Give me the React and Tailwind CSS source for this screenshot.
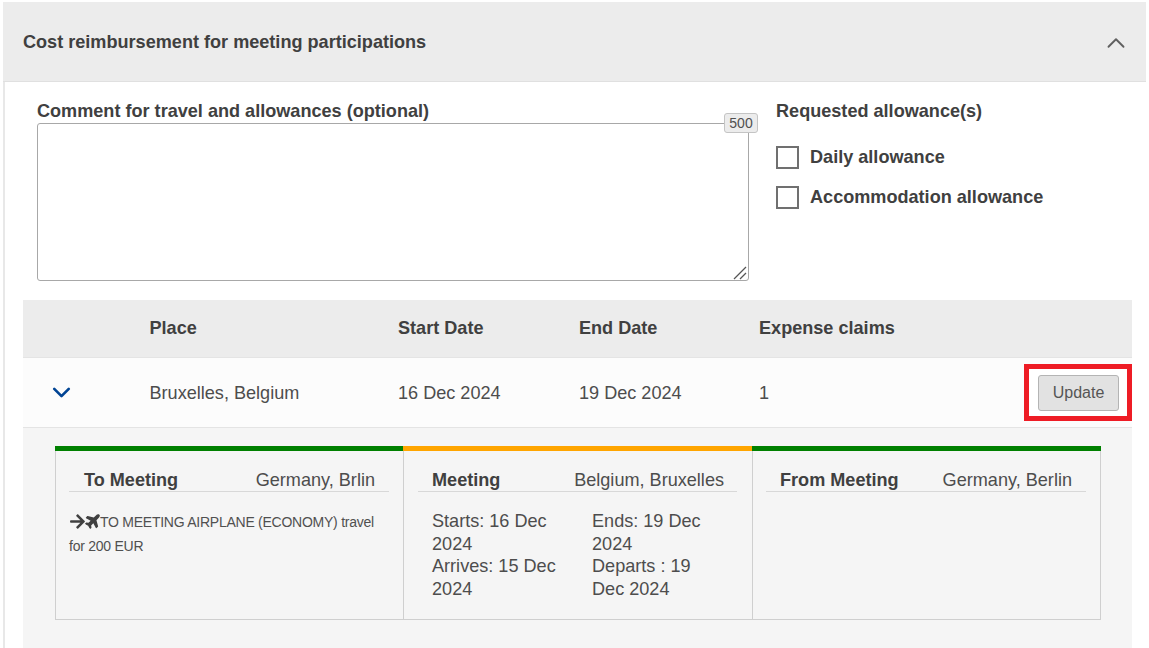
import React from 'react';
import { ChevronUp, ChevronDown } from 'lucide-react';
import { FaArrowRight, FaPlane } from 'react-icons/fa';

const Allowance = ({ label }) => (
  <label className="flex items-center gap-[11px] h-[24px] font-bold text-[#404040] text-[18.1px]">
    <span className="w-[23px] h-[23px] border-2 border-[#707070] bg-white shrink-0" />
    <span className="pt-[1px]">{label}</span>
  </label>
);

const LegCard = ({ title, place, color, width, head, last, children }) => (
  <div className={`${width} h-[174px] border-b border-l border-[#cfcfcf] ${last ? 'border-r' : ''}`}>
    <div className={`h-[5px] -ml-[1px] ${last ? '-mr-[1px]' : ''} ${color}`} />
    <div className={`mt-[16px] pt-[2px] h-[25px] flex justify-between items-center border-b border-[#d8d8d8] text-[18.1px] leading-[20px] ${head}`}>
      <span className="font-bold text-[#404040]">{title}</span>
      <span className="text-[#4d4d4d]">{place}</span>
    </div>
    {children}
  </div>
);

export default function App() {
  return (
    <div className="w-[1149px] h-[648px] overflow-hidden bg-white pt-[2px] pl-[3px] pr-[3px] font-['Liberation_Sans',Arial,sans-serif] text-[#404040]">
      <div className="h-[646px] border-l-2 border-[#e8e8e8]">
        <div className="-ml-[2px] h-[80px] pt-[2px] bg-[#ececec] border-b border-[#e0e0e0] flex items-center justify-between pl-[20px] pr-[15px]">
          <h2 className="font-bold text-[18.1px] text-[#404040]">Cost reimbursement for meeting participations</h2>
          <ChevronUp size={30} strokeWidth={1.5} className="text-[#606060]" />
        </div>

        <div className="flex pl-[32px] pt-[18px] h-[218px]">
          <div className="w-[712px]">
            <div className="mb-[1px] font-bold text-[18.1px] leading-[22px] text-[#404040]">Comment for travel and allowances (optional)</div>
            <div className="relative">
              <textarea className="block w-[712px] h-[158px] border border-[#a8a8a8] rounded-[3px] bg-white outline-none resize-none" />
              <span className="absolute right-[-9px] top-[-10px] w-[34px] h-[20px] flex items-center justify-center bg-[#ececec] border border-[#c4c4c4] rounded-[3px] text-[14px] text-[#505050]">500</span>
              <svg className="absolute right-[1px] bottom-[1px] w-[15px] h-[15px]" viewBox="0 0 15 15" fill="none" stroke="#555555" strokeWidth="1.2">
                <path d="M1 14 L13 2" />
                <path d="M7 14 L13 8" />
              </svg>
            </div>
          </div>
          <div className="ml-[27px]">
            <div className="font-bold text-[18.1px] leading-[22px] text-[#404040]">Requested allowance(s)</div>
            <div className="mt-[23px] flex flex-col gap-[16px]">
              <Allowance label="Daily allowance" />
              <Allowance label="Accommodation allowance" />
            </div>
          </div>
        </div>

        <div className="ml-[18px] w-[1109px]">
          <div className="h-[58px] pt-[1px] bg-[#ececec] flex items-center font-bold text-[18.1px] text-[#404040] border-b border-[#e4e4e4]">
            <span className="w-[126.5px]" />
            <span className="w-[248.5px]">Place</span>
            <span className="w-[181px]">Start Date</span>
            <span className="w-[180px]">End Date</span>
            <span>Expense claims</span>
          </div>
          <div className="h-[70px] bg-[#fcfcfc] flex items-center text-[18.1px] text-[#4d4d4d] border-b border-[#e4e4e4]">
            <span className="w-[126.5px] pl-[24px]">
              <ChevronDown size={29} strokeWidth={2.2} className="text-[#004494]" />
            </span>
            <span className="w-[248.5px] mt-[2px]">Bruxelles, Belgium</span>
            <span className="w-[181px] mt-[2px]">16 Dec 2024</span>
            <span className="w-[180px] mt-[2px]">19 Dec 2024</span>
            <span className="flex-1 mt-[2px]">1</span>
            <div className="w-[108px] h-[57px] border-[5px] border-[#ee1c25] bg-white flex items-center justify-center">
              <button className="w-[81px] h-[36px] mt-[1px] ml-[1px] bg-[#e2e2e2] border border-[#b4b4b4] rounded-[3px] text-[16px] text-[#555555]">Update</button>
            </div>
          </div>
          <div className="h-[220px] bg-[#f5f5f5] pt-[18px] pl-[32px] flex">
            <LegCard title="To Meeting" place="Germany, Brlin" color="bg-[#008000]" width="w-[348px]" head="ml-[13px] mr-[14px] pl-[15px] pr-[14px]">
              <div className="mx-[13px] mt-[19px] text-[14px] leading-[23.5px] text-[#505050] tracking-[-0.25px]">
                <FaArrowRight size={17} className="inline text-[#404040] -mt-[4px]" />
                <FaPlane size={17} className="inline text-[#404040] -mt-[6px] -ml-[1px] -mr-[2px] -rotate-45" />
                TO MEETING AIRPLANE (ECONOMY) travel for 200 EUR
              </div>
            </LegCard>
            <LegCard title="Meeting" place="Belgium, Bruxelles" color="bg-[#ffa500]" width="w-[349px]" head="ml-[14px] mr-[15px] pl-[14px] pr-[13px]">
              <div className="mt-[18px] ml-[28px] flex text-[18.1px] leading-[22.7px] text-[#4d4d4d]">
                <div className="w-[160px]">
                  <div className="w-[130px]">Starts: 16 Dec 2024</div>
                  <div className="w-[130px]">Arrives: 15 Dec 2024</div>
                </div>
                <div>
                  <div className="w-[118px]">Ends: 19 Dec 2024</div>
                  <div className="w-[118px]">Departs : 19 Dec 2024</div>
                </div>
              </div>
            </LegCard>
            <LegCard title="From Meeting" place="Germany, Berlin" color="bg-[#008000]" width="w-[349px]" head="ml-[13px] mr-[14px] pl-[14px] pr-[14px]" last />
          </div>
        </div>
      </div>
    </div>
  );
}
